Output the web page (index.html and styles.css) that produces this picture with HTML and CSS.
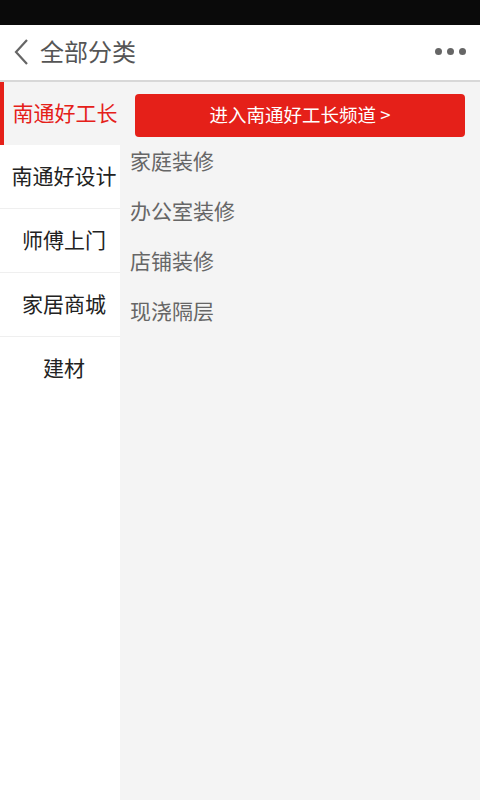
FILE: index.html
```html
<!DOCTYPE html>
<html lang="zh">
<head>
<meta charset="utf-8">
<link rel="stylesheet" href="styles.css">
</head>
<body>
<div class="statusbar"></div>
<header class="header">
  <svg class="back" width="18" height="26" viewBox="0 0 18 26"><path d="M14 1 L3 13 L14 25" fill="none" stroke="#666" stroke-width="2.2"/></svg>
  <h1 class="title">全部分类</h1>
  <div class="more"><span></span><span></span><span></span></div>
</header>
<main class="main">
  <nav class="sidebar">
    <div class="cat active">南通好工长</div>
    <div class="cat">南通好设计</div>
    <div class="cat">师傅上门</div>
    <div class="cat">家居商城</div>
    <div class="cat">建材</div>
  </nav>
  <section class="content">
    <a class="channel">进入南通好工长频道 &gt;</a>
    <ul class="list">
      <li>家庭装修</li>
      <li>办公室装修</li>
      <li>店铺装修</li>
      <li>现浇隔层</li>
    </ul>
  </section>
</main>
</body>
</html>
```
FILE: styles.css
```css
* { box-sizing: border-box; }
html, body { margin: 0; padding: 0; }
body {
  width: 480px;
  height: 800px;
  overflow: hidden;
  font-family: "Noto Sans CJK SC", "Noto Sans", sans-serif;
  display: flex;
  flex-direction: column;
}
.statusbar { height: 25px; background: #0a0a0a; flex: none; }
.header {
  height: 57px;
  flex: none;
  background: #fff;
  border-bottom: 2px solid #d8d8d8;
  display: flex;
  align-items: center;
  padding: 0 14px 2px 13px;
}
.back { display: block; margin-right: 9px; }
.title {
  margin: 0;
  font-size: 24px;
  line-height: 1;
  font-weight: 400;
  color: #555;
  flex: 1;
  padding-bottom: 2px;
}
.more { display: flex; gap: 5px; }
.more span { width: 7px; height: 7px; border-radius: 50%; background: #666; }
.main { flex: 1; display: flex; min-height: 0; }
.sidebar { width: 120px; flex: none; background: #fff; }
.cat {
  height: 64px;
  display: flex;
  align-items: center;
  justify-content: center;
  font-size: 21px;
  line-height: 1;
  color: #222;
  border-bottom: 1px solid #efefef;
  padding: 0 0 3px 8px;
}
.cat:last-child { border-bottom: none; }
.cat.active {
  height: 63px;
  background: #f4f4f4;
  color: #e52019;
  border-left: 4px solid #e52019;
  border-bottom: none;
  padding-left: 6px;
}
.content { flex: 1; background: #f4f4f4; padding: 12px 15px 0 10px; }
.channel {
  display: flex;
  align-items: center;
  justify-content: center;
  height: 43px;
  margin-left: 5px;
  background: #e52019;
  color: #fff;
  border-radius: 4px;
  font-size: 18.5px;
  line-height: 1;
  padding-bottom: 2px;
  text-decoration: none;
}
.list { list-style: none; margin: 0; padding: 0; }
.list li {
  height: 50px;
  line-height: 46px;
  font-size: 21px;
  color: #666;
}
```
